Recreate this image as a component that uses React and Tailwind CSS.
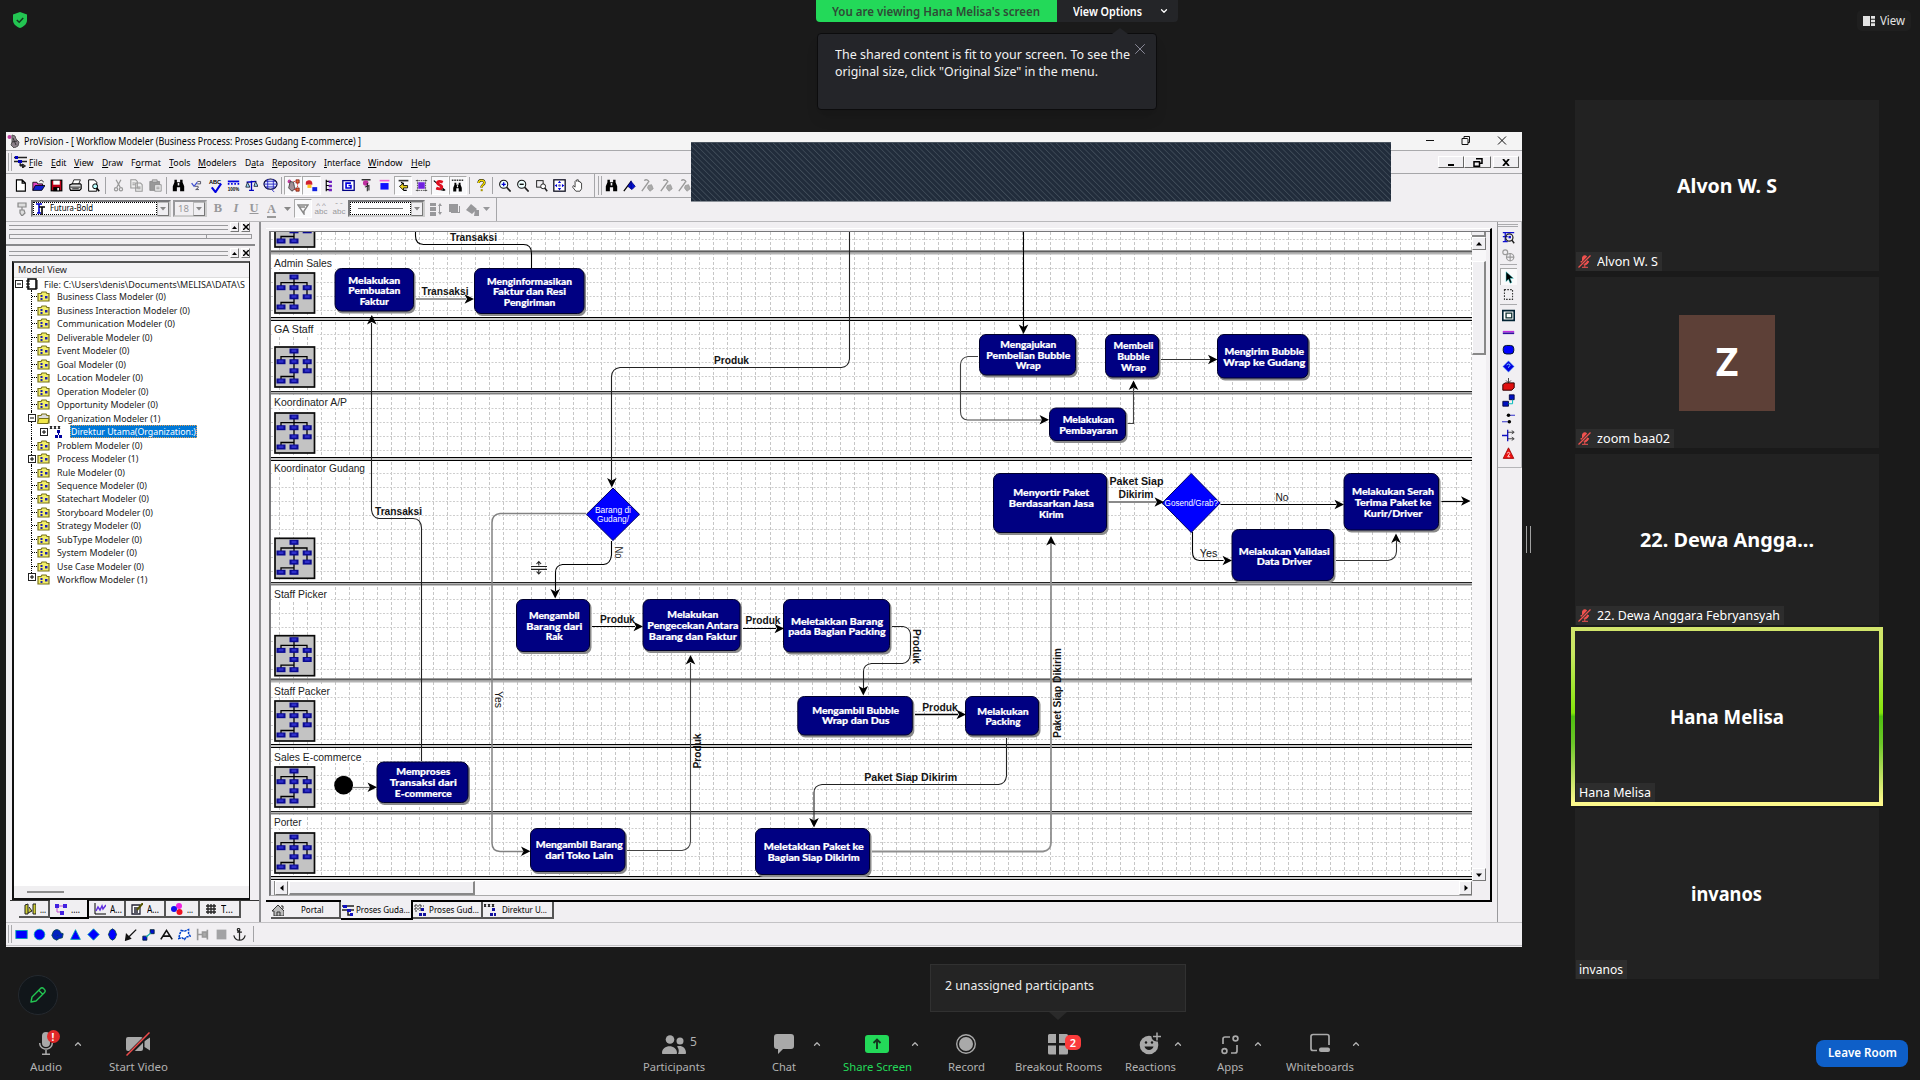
import React, { useLayoutEffect, useRef } from "react";
import { ChevronUp, ChevronDown, X } from "lucide-react";

// Single line of text squeezed or stretched to a given width
function Fit({ w, className = "", children }) {
  const ref = useRef(null);

  useLayoutEffect(() => {
    const el = ref.current;
    el.style.transform = "none";
    const natural = el.getBoundingClientRect().width;
    if (natural) el.style.transform = `scaleX(${w / natural})`;
  }, [w, children]);

  return (
    <span className="inline-block shrink-0 whitespace-nowrap" style={{ width: w }}>
      <span ref={ref} className={`inline-block origin-left whitespace-pre ${className}`}>
        {children}
      </span>
    </span>
  );
}

/* ---------- toolbar icons (16x16) ---------- */

const binoculars = (
  <path d="M3 1h3v3h4V1h3v3l2 5v6h-5v-5H6v5H1V9l2-5z M7 5v3h2V5z" fill="#000" />
);

const icons = {
  doc: <path d="M3 1h7l4 4v10H3z M10 1v4h4" fill="#fff" stroke="#000" strokeWidth="1.4" />,
  open: (
    <>
      <path d="M1 14V4h5l1 2h6v3" fill="#e040c0" stroke="#000" />
      <path d="M1 14l3-6h12l-4 6z" fill="#1020d0" stroke="#000" />
      <path d="M9 3c2-2 4-2 5 1" fill="none" stroke="#000" />
    </>
  ),
  save: (
    <>
      <rect x="1.5" y="1.5" width="13" height="13" fill="#c00018" stroke="#000" strokeWidth="1.5" />
      <rect x="4" y="2" width="8" height="5" fill="#fff" />
      <rect x="4" y="10" width="8" height="5" fill="#000" />
      <rect x="9" y="11" width="2" height="3" fill="#fff" />
    </>
  ),
  print: (
    <>
      <path d="M4 6l2-5h8l-2 5" fill="#fff" stroke="#000" />
      <path d="M1 7l3-1h10l1 1v5l-2 2H2l-1-2z" fill="#ddd" stroke="#000" strokeWidth="1.4" />
      <path d="M2 10h12M4 12h8" stroke="#000" />
    </>
  ),
  preview: (
    <>
      <path d="M2 1h7l3 3v11H2z" fill="#fff" stroke="#000" strokeWidth="1.2" />
      <circle cx="10" cy="9" r="3" fill="#bff" stroke="#000" strokeWidth="1.2" />
      <path d="M12 11l3 4" stroke="#000" strokeWidth="2" />
    </>
  ),
  cut: (
    <g fill="none" stroke="#999" strokeWidth="1.5">
      <path d="M5 1l5 9M11 1L6 10" />
      <circle cx="5" cy="12.5" r="2" />
      <circle cx="11" cy="12.5" r="2" />
    </g>
  ),
  copy: (
    <g fill="#eee" stroke="#999" strokeWidth="1.3">
      <path d="M1 1h6l2 2v8H1zM7 5h6l2 2v8H7z" />
      <path d="M3 5h3M3 7h3M9 10h4M9 12h4" />
    </g>
  ),
  paste: (
    <>
      <path d="M1 3h12v11H1z" fill="#999" stroke="#888" />
      <path d="M4 1h6v3H4z" fill="#ccc" stroke="#888" />
      <path d="M7 7h8v8H7z" fill="#eee" stroke="#888" />
      <path d="M9 10h4M9 12h4" stroke="#888" />
    </>
  ),
  find: binoculars,
  v2: (
    <>
      <path d="M2 5l3 4 4-5" fill="none" stroke="#4050d0" strokeWidth="1.6" />
      <path d="M9 3h4v3H9M6 9h4v2l-3 2h4" fill="none" stroke="#556" strokeWidth="1.2" />
    </>
  ),
  abc: (
    <>
      <text x="1" y="6" fontSize="6.5" fontWeight="bold" fontFamily="Liberation Sans" textLength="13" lengthAdjust="spacingAndGlyphs">ABC</text>
      <path d="M4 10l4 5 6-9" fill="none" stroke="#0000e0" strokeWidth="2.2" />
    </>
  ),
  ruler: (
    <>
      <path d="M1 3h14" stroke="#0000e0" strokeWidth="2.2" />
      <path d="M1 6h2M5 6h2M9 6h2M13 6h2" stroke="#0000e0" strokeWidth="2" />
      <text x="1" y="14.5" fontSize="6.5" fontWeight="bold" fontFamily="Liberation Sans" textLength="14" lengthAdjust="spacingAndGlyphs">100%</text>
    </>
  ),
  scales: (
    <>
      <path d="M8 2v12M5 14h6M2 4l12-1" stroke="#0000c0" strokeWidth="1.6" />
      <path d="M3 4l-2 6h5zM13 3l-2 6h5z" fill="#9df" stroke="#112" />
    </>
  ),
  globe: (
    <>
      <ellipse cx="8" cy="6.5" rx="7" ry="5.5" fill="#dfe6ff" stroke="#003" strokeWidth="1.2" />
      <path d="M1 6.5h14M3 3.5h10M3 9.5h10M5 1v11M11 1v11M9 12l3 3" stroke="#2020c0" strokeWidth=".9" />
    </>
  ),
  flow1: (
    <>
      <circle cx="3" cy="3" r="2.3" fill="#c040a0" />
      <path d="M4 3l4 1 1 5 1 3-4 3-4-4z" fill="#a09098" stroke="#333" />
      <path d="M11 1h4v4h-4zM11 11h4v4h-4z" fill="#e06a3a" stroke="#600" strokeWidth=".8" />
      <path d="M8 3h3M9 13h2M13 5v6" stroke="#d01010" strokeDasharray="2 1" />
    </>
  ),
  flow2: (
    <>
      <path d="M1 6a4 4 0 018-1v2H1z" fill="#d02030" />
      <path d="M3 7h5v4H3z" fill="#ffc020" />
      <path d="M9 10h6v5H9z" fill="#1020e0" />
    </>
  ),
  tree: (
    <>
      <path d="M4 1v14M4 3h4M4 8h4M4 13h4" stroke="#000" strokeWidth="1.4" />
      <path d="M7 2h4v3H7zM7 7h4v3H7zM7 12h4v3H7z" fill="#7020c0" />
    </>
  ),
  gbox: (
    <>
      <rect x="1" y="2" width="14" height="12" fill="#fff" stroke="#000080" strokeWidth="1.6" />
      <path d="M11 5H5v6h6V8H8" fill="none" stroke="#0000e0" strokeWidth="2" />
    </>
  ),
  node1: (
    <>
      <path d="M2 1h11" stroke="#000" strokeWidth="1.5" />
      <circle cx="7" cy="5" r="3.4" fill="#c030a0" />
      <path d="M9 5v10M6 10l5-2v6" stroke="#222" fill="none" strokeWidth="1.3" />
    </>
  ),
  node2: (
    <>
      <path d="M2 2h12" stroke="#f060d0" strokeWidth="2" />
      <rect x="3" y="5" width="10" height="8" fill="#1010ff" />
    </>
  ),
  node3: (
    <>
      <path d="M2 1h12v2H2z" fill="#333" />
      <path d="M3 9l5-4v3h5v3H8v3z" fill="#e8d020" stroke="#000" />
      <path d="M5 4l3 2M8 14h4" stroke="#000" strokeWidth="1.5" />
    </>
  ),
  node4: (
    <>
      <path d="M1 2h14M1 14h14M3 1v14M13 1v14" stroke="#333" strokeDasharray="2 1" />
      <rect x="4" y="4" width="8" height="8" fill="#7020e0" />
    </>
  ),
  sred: (
    <>
      <path d="M1 2l14 12M4 12l10 2" stroke="#000" strokeWidth="1.4" />
      <path d="M12 4c-6-3-9 1-4 3s3 7-4 4" fill="none" stroke="#e01020" strokeWidth="3.4" />
    </>
  ),
  bino2: (
    <>
      <path d="M1 1.5h14" stroke="#333" strokeDasharray="2 1" strokeWidth="2" />
      <g transform="translate(2 4) scale(.75)">{binoculars}</g>
    </>
  ),
  help: (
    <>
      <path d="M4.5 5c0-4.500 7-4.500 7-.5 0 3-3.500 2.500-3.500 6" fill="none" stroke="#000" strokeWidth="3" />
      <path d="M4.500 5c0-4.500 7-4.500 7-.5 0 3-3.500 2.500-3.500 6" fill="none" stroke="#f0d800" strokeWidth="2" />
      <rect x="7" y="12.500" width="2.500" height="2.500" fill="#a89400" />
    </>
  ),
  zin: (
    <>
      <circle cx="7" cy="6.5" r="5" fill="#eff" stroke="#111" strokeWidth="1.3" />
      <path d="M10.5 10l5 5.5" stroke="#222" strokeWidth="2" />
      <path d="M4.5 6.5h5M7 4v5" stroke="#0000d0" strokeWidth="1.6" />
    </>
  ),
  zout: (
    <>
      <circle cx="7" cy="6.5" r="5" fill="#eff" stroke="#111" strokeWidth="1.3" />
      <path d="M10.5 10l5 5.5" stroke="#222" strokeWidth="2" />
      <path d="M4.5 6.5h5" stroke="#000" strokeWidth="1.6" />
    </>
  ),
  zsel: (
    <>
      <rect x="2" y="2" width="8" height="8" fill="none" stroke="#222" strokeWidth="1.2" />
      <circle cx="10" cy="9" r="3" fill="#fff" stroke="#222" strokeWidth="1.2" />
      <path d="M12 11l3 4" stroke="#222" strokeWidth="2" />
    </>
  ),
  zfit: (
    <>
      <rect x="1" y="1" width="14" height="14" fill="#fff" stroke="#112" strokeWidth="1.6" />
      <path d="M8 2l2 3H6zM8 14l2-3H6zM2 8l3-2v4zM14 8l-3-2v4z" fill="#0000e0" />
      <circle cx="8" cy="8" r="1.6" fill="#66a" />
    </>
  ),
  hand: (
    <path
      d="M6 15l-4-5 1-2 2 2V3l1-1 1 1V1l2 0v2l2 0v1l2 1v7l-2 3z"
      fill="#fff"
      stroke="#444"
      strokeWidth="1.2"
    />
  ),
  flag: (
    <>
      <path d="M1 15L10 3" stroke="#000" strokeWidth="1.6" />
      <path d="M10 2v10M6 9l4-6 5 6-4 4z" fill="#0010d0" stroke="#000080" />
    </>
  ),
  flagOff: (
    <g stroke="#999" fill="#aaa">
      <path d="M1 15L9 4M4 2c2-2 5-1 6 2" fill="none" strokeWidth="1.6" />
      <path d="M9 8l4-1 2 5-4 3-3-4z" />
    </g>
  ),
};

function Icon({ name, size = 14 }) {
  return (
    <svg width={size} height={size} viewBox="0 0 16 16" className="shrink-0">
      {icons[name]}
    </svg>
  );
}

const Sep = ({ className = "w-[6px]" }) => (
  <div className={`flex h-full shrink-0 justify-center py-[3px] ${className}`}>
    <div className="w-px bg-[#a3a3a6]" />
  </div>
);

const Grip = () => (
  <div className="flex h-full shrink-0 gap-[2px] px-[2px] py-[2px]">
    <div className="w-px bg-[#a9a9ac]" />
    <div className="w-px bg-[#a9a9ac]" />
  </div>
);

const groups = [
  ["doc", "open", "save", "print", "preview"],
  ["cut", "copy", "paste"],
  ["find", "v2", "abc", "ruler", "scales", "globe"],
  ["flow1", "flow2", "tree", "gbox", "node1", "node2", "node3", "node4", "sred", "bino2"],
  ["help"],
  ["zin", "zout", "zsel", "zfit", "hand"],
];
const pressed = ["flow1", "flow2", "node3", "sred", "bino2"];

function MainToolbar() {
  return (
    <div className="flex h-[24px] items-center">
      <div className="flex h-full w-[589px] items-center border-r border-b border-[#a6a6a9]">
        <div className="w-[5px]" />
        {groups.map((g, i) => (
          <React.Fragment key={i}>
            {i > 0 && <Sep className={i === 1 ? "w-[7px]" : "w-[5px]"} />}
            {g.map((n) => (
              <div
                key={n}
                className={`flex h-[19px] w-[18.3px] shrink-0 items-center justify-center ${
                  pressed.includes(n) ? "border border-t-[#aaa] border-r-white border-b-white border-l-[#aaa] bg-[#f9f9fb]" : ""
                }`}
              >
                <Icon name={n} size={n === "globe" || n === "abc" ? 15 : 13} />
              </div>
            ))}
          </React.Fragment>
        ))}
      </div>
      <div className="flex h-full w-[330px] items-center border-b border-[#a6a6a9] pl-px">
        <Grip />
        <div className="-ml-[2px] flex">
          {["find", "flag", "flagOff", "flagOff", "flagOff"].map((n, i) => (
            <div key={i} className="flex w-[18.3px] shrink-0 justify-center">
              <Icon name={n} size={13} />
            </div>
          ))}
        </div>
      </div>
    </div>
  );
}

const DropArrow = () => (
  <div className="flex h-[14px] w-[12px] shrink-0 items-center justify-center border border-[#bbb] border-r-[#777] border-b-[#777] bg-[#f0eff2]">
    <svg width="6" height="4" viewBox="0 0 6 4">
      <path d="M0 0h6L3 3.5z" fill="#888" />
    </svg>
  </div>
);

function FormatToolbar() {
  return (
    <div className="flex h-[24px] border-b border-[#b9b8bb]">
      <div className="flex h-[23px] w-[491px] items-center border-r border-[#a6a6a9] pb-[2px] font-['Liberation_Serif'] text-[12.5px] font-bold text-[#98989b]">
        <svg className="mr-[4px] ml-[11px] shrink-0" width="10" height="14" viewBox="0 0 10 14">
          <path d="M1 1h8v4H1zM5 5v3M3 8h4l1 3-3 3-2-3z" fill="#ddd" stroke="#888" strokeWidth="1.2" />
        </svg>
        <div className="flex h-[17px] w-[140px] shrink-0 items-center border-2 border-[#77777a] border-r-[#ccc] border-b-[#ccc] bg-white">
          <div className="flex h-[13px] flex-1 items-center border border-dotted border-black">
            <svg className="mr-[4px] ml-px shrink-0" width="11" height="12" viewBox="0 0 11 12">
              <path d="M1 1h6M4 1v9M2 10h4" stroke="#0000d0" strokeWidth="1.6" fill="none" />
              <path d="M4 4h6M7 4v8" stroke="#000" strokeWidth="1.6" />
            </svg>
            <Fit w={43} className="-translate-y-px font-['Noto_Sans'] text-[9.5px] leading-none font-normal text-black">Futura-Bold</Fit>
          </div>
          <DropArrow />
        </div>
        <div className="ml-[2px] flex h-[17px] w-[34px] shrink-0 items-center border-2 border-[#99999c] border-r-[#ccc] border-b-[#ccc]">
          <span className="flex-1 pl-[3px] font-['Noto_Sans'] text-[9.5px] leading-none font-normal">18</span>
          <DropArrow />
        </div>
        <span className="ml-[2px] w-[18px] shrink-0 text-center">B</span>
        <span className="w-[18px] shrink-0 text-center italic">I</span>
        <span className="w-[18px] shrink-0 text-center underline">U</span>
        <span className="w-[17px] shrink-0 text-center leading-[12px]">
          <span className="border-b-2 border-[#999]">A</span>
        </span>
        <svg width="7" height="4" viewBox="0 0 7 4" className="ml-[4px] shrink-0"><path d="M0 0h7L3.5 4z" fill="#888" /></svg>
        <div className="ml-[3px] flex h-[19px] w-[18px] shrink-0 items-center justify-center border border-t-[#aaa] border-r-white border-b-white border-l-[#aaa] bg-[#f9f9fb]">
          <svg width="12" height="12" viewBox="0 0 12 12"><path d="M1 2h10L7 8v3zM3 4l5 0" fill="none" stroke="#888" strokeWidth="1.4" /></svg>
        </div>
        {["^ ^", "\u02c7 \u02c7"].map((m) => (
          <span key={m} className="flex w-[18px] shrink-0 flex-col items-center font-['Liberation_Sans'] text-[8px] leading-[6px] font-normal">
            <span className="whitespace-pre">{m}</span>
            <span>abc</span>
          </span>
        ))}
        <div className="flex h-[17px] w-[77px] shrink-0 items-center border-2 border-[#77777a] border-r-[#ccc] border-b-[#ccc] bg-white">
          <div className="flex h-[13px] flex-1 items-center border border-dotted border-black px-[7px]">
            <div className="h-px w-full bg-[#777]" />
          </div>
          <DropArrow />
        </div>
        <svg width="66" height="14" viewBox="0 0 66 14" className="shrink-0">
          <g fill="#98989b">
            <path d="M5 1h6v3H5zM5 5h6v4H5zM5 10h6v4H5zM13 4l2-3 2 3zM13 10l2 3 2-3zM14 4h1v6h-1z" />
            <path d="M24 2h9v8h-9zM26 11h9V4h-1v6h-8z" />
            <path d="M41 8l5-6 6 5-5 5zM50 8h4v6h-5zM58 5h7l-3.5 4z" />
          </g>
        </svg>
      </div>
    </div>
  );
}

const menu = [
  ["", "F", "ile", 13.5],
  ["", "E", "dit", 15.5],
  ["", "V", "iew", 19.5],
  ["", "D", "raw", 21],
  ["F", "o", "rmat", 30],
  ["", "T", "ools", 21.5],
  ["", "M", "odelers", 38.5],
  ["D", "a", "ta", 19],
  ["", "R", "epository", 44],
  ["", "I", "nterface", 36.5],
  ["", "W", "indow", 34.5],
  ["", "H", "elp", 19.5],
];

function MenuBar() {
  const btn =
    "flex h-[12px] items-center justify-center border border-white border-r-[#666] border-b-[#666] bg-[#f0eff2]";
  return (
    <div className="flex h-[23px] items-center border-b border-[#a6a6a9]">
      <Grip />
      <svg width="13" height="12" viewBox="0 0 13 12" className="mr-[2px] shrink-0">
        <path d="M0 1.5h13M0 5.5h13" stroke="#222" strokeWidth="1.6" />
        <path d="M1 0h3v3H1zM4 4h4v3H4z" fill="#0000c0" />
        <path d="M6 7v3h4M8.5 8l3 2-3 2z" fill="#222" stroke="#222" />
      </svg>
      <div className="flex flex-1 gap-[8px] pt-[2px] font-['Noto_Sans'] text-[9.8px] leading-[14px] text-black">
        {menu.map(([a, b, c, w]) => (
          <Fit key={b + c} w={w}>
            {a}
            <span className="underline">{b}</span>
            {c}
          </Fit>
        ))}
      </div>
      <div className="mr-[3px] flex">
        <div className={`w-[26px] ${btn}`}>
          <div className="mt-[5px] h-[2px] w-[6px] bg-black" />
        </div>
        <div className={`w-[27px] ${btn}`}>
          <svg width="10" height="9" viewBox="0 0 10 9">
            <path d="M3 .8h6v4.500H6M1 3.800h5.500v4.500H1z" fill="none" stroke="#000" strokeWidth="1.5" />
          </svg>
        </div>
        <div className={`ml-[2px] w-[26px] ${btn}`}>
          <svg width="8" height="7" viewBox="0 0 8 7">
            <path d="M1 0l6 7M7 0L1 7" stroke="#000" strokeWidth="1.8" />
          </svg>
        </div>
      </div>
    </div>
  );
}

function TitleBar() {
  return (
    <div className="flex h-[19px] items-center border-b border-[#a9a9ac] bg-[#f4f4f4]">
      <svg width="13" height="14" viewBox="0 0 13 14" className="mr-[4px] ml-[1px]">
        <circle cx="2.5" cy="3" r="2" fill="#c040a0" />
        <path d="M5 1l3 1 1 3 3 3-1 4-4 2-3-3 1-3z" fill="#8a8088" stroke="#555" />
        <path d="M6 4l3 7M5 8l5-1" stroke="#333" />
      </svg>
      <div className="flex pb-[3px] leading-none">
        <Fit w={337} className="font-['Noto_Sans'] text-[10.5px] leading-[14px] text-black">
          {"ProVision - [ Workflow Modeler (Business Process: Proses Gudang E-commerce) ]"}
        </Fit>
      </div>
      <svg width="84" height="12" viewBox="0 0 84 12" className="mr-[14px] ml-auto">
        <path d="M2 5.5h8" stroke="#111" />
        <path d="M38 3.500h5a1 1 0 011 1v5h-6zM40 3V1.500h5.500v6H44" fill="none" stroke="#111" />
        <path d="M74 1.500l8 8M82 1.500l-8 8" stroke="#111" />
      </svg>
    </div>
  );
}

/* ---------- model tree ---------- */

const tree = [
  ["Business Class Modeler (0)", 109],
  ["Business Interaction Modeler (0)", 133],
  ["Communication Modeler (0)", 118],
  ["Deliverable Modeler (0)", 95.5],
  ["Event Modeler (0)", 72.5],
  ["Goal Modeler (0)", 69],
  ["Location Modeler (0)", 86],
  ["Operation Modeler (0)", 91.5],
  ["Opportunity Modeler (0)", 101],
  ["Organization Modeler (1)", 103.5, "minus"],
  ["Direktur Utama(Organization:)", 125, "child"],
  ["Problem Modeler (0)", 85.5],
  ["Process Modeler (1)", 81.5, "plus"],
  ["Rule Modeler (0)", 68],
  ["Sequence Modeler (0)", 90],
  ["Statechart Modeler (0)", 92],
  ["Storyboard Modeler (0)", 96],
  ["Strategy Modeler (0)", 84],
  ["SubType Modeler (0)", 85],
  ["System Modeler (0)", 80],
  ["Use Case Modeler (0)", 87],
  ["Workflow Modeler (1)", 90.5, "plus"],
];

const Toggle = ({ minus }) => (
  <svg width="8" height="8" viewBox="0 0 8 8" className="shrink-0">
    <rect x=".5" y=".5" width="7" height="7" fill="#fff" stroke="#222" />
    <path d={minus ? "M2 4h4" : "M2 4h4M4 2v4"} stroke="#000" />
  </svg>
);

const Folder = ({ open }) => (
  <svg width="13" height="11" viewBox="0 0 13 11" className="shrink-0">
    <path d="M1 10V2.500h3l1-1.500h4l1 1.500h2V10z" fill={open ? "#ddd" : "#f2ee6a"} stroke="#77711a" strokeWidth="1.2" />
    {open ? (
      <path d="M.5 10.500l1.500-5h10l-1 5z" fill="#f2e84a" stroke="#77711a" />
    ) : (
      <path d="M3.500 4h2v2h-2zM3.500 7h2v2h-2zM8 5h2.500v2.500H8z" fill="#2020b0" />
    )}
  </svg>
);

function ModelTree() {
  return (
    <div className="flex h-[639px] w-[238px] flex-col overflow-hidden border-2 border-r border-[#111] border-t-[#555] bg-white font-['Noto_Sans'] text-[9.7px] leading-[13px] text-[#1b1b1b]">
      <div className="flex h-[15px] items-center border-b border-[#ddd] bg-[#f4f3f5] pb-[2px] pl-[4px]">
        <Fit w={49}>Model View</Fit>
      </div>
      <div className="flex h-[12.2px] shrink-0 items-center">
        <div className="ml-[1px]">
          <Toggle minus />
        </div>
        <svg width="12" height="12" viewBox="0 0 12 12" className="mr-[6px] ml-[3px] shrink-0">
          <path d="M2 1h8v10H2z" fill="#fff" stroke="#000" strokeWidth="1.5" />
          <path d="M0 3h4M0 6h4M0 9h4M11 2v9" stroke="#000" />
        </svg>
        <Fit w={201}>{"File: C:\\Users\\denis\\Documents\\MELISA\\DATA\\S"}</Fit>
      </div>
      <div className="flex-1">
        {tree.map(([label, w, kind], i) => (
          <div key={label} className="flex h-[13.48px] items-center pl-[17px]">
            {kind === "child" ? (
              <>
                <div className="h-full w-[11px] border-l border-dotted border-black" />
                <div className="-ml-[2px]">
                  <Toggle />
                </div>
                <svg width="14" height="12" viewBox="0 0 14 12" className="mr-[7px] ml-[1px] shrink-0">
                  <path d="M1 0l2 3M3 0L1 3M5 0l2 3M7 0L5 3M9 0l2 3M11 0L9 3" stroke="#000" />
                  <path d="M8 4h3v3H8zM6 9h3v3H6zM10 9h3v3h-3z" fill="#0000a0" />
                  <path d="M9.5 7v2" stroke="#0000a0" />
                </svg>
                <div className="flex h-[13px] items-center bg-[#0078d7] px-px text-white outline outline-dotted -outline-offset-1 outline-[#e8a050]">
                  <Fit w={w}>{label}</Fit>
                </div>
              </>
            ) : (
              <>
                <div
                  className={`flex w-[6px] shrink-0 items-center border-l border-dotted border-black ${
                    i === tree.length - 1 ? "mb-[6px] h-[8px]" : "h-full"
                  }`}
                >
                  {kind ? (
                    <div className="-ml-[4px]">
                      <Toggle minus={kind === "minus"} />
                    </div>
                  ) : (
                    <div className="w-full border-t border-dotted border-black" />
                  )}
                </div>
                <div className="mr-[7px]">
                  <Folder open={kind === "minus"} />
                </div>
                <Fit w={w}>{label}</Fit>
              </>
            )}
          </div>
        ))}
      </div>
      <div className="flex h-[12px] shrink-0 items-center bg-[#f0eff1] pl-[13px]">
        <div className="h-[2px] w-[37px] bg-[#8b8b8b]" />
      </div>
    </div>
  );
}

const PanelHead = () => (
  <div className="flex h-[11px] items-center pb-px pl-[3px]">
    <div className="mr-[2px] h-[5px] w-[219px] border-y border-[#99999c]" />
    <div className="mr-[2px] flex h-[10px] w-[9px] items-center justify-center border border-white border-r-[#777] border-b-[#777]">
      <svg width="5" height="3" viewBox="0 0 5 3"><path d="M0 3h5L2.5 0z" /></svg>
    </div>
    <div className="flex h-[10px] w-[9px] items-center justify-center border border-white border-r-[#777] border-b-[#777]">
      <svg width="6" height="6" viewBox="0 0 6 6"><path d="M0 0l6 6M6 0L0 6" stroke="#000" strokeWidth="1.5" /></svg>
    </div>
  </div>
);

const sideTabs = [
  { w: "w-[31px]", label: "...", lw: 6, icon: <path d="M1 2l3-1v10H1zM9 1h3v10H9zM5 4l3 4-4 2" fill="#cc3" stroke="#222" /> },
  {
    w: "w-[39px]",
    label: "....",
    lw: 9,
    active: true,
    icon: (
      <>
        <path d="M0 1h4v4H0zM8 1h4v4H8zM5 8h4v4H5z" fill="#4020e0" />
        <path d="M4 3h4M2 5v4h3" stroke="#c050d0" fill="none" />
      </>
    ),
  },
  { w: "w-[37px]", label: "A...", lw: 12, icon: <><path d="M1 0v11h11" fill="none" stroke="#000" /><path d="M2 8l2-4 2 3 2-4 1 3 3-4" fill="none" stroke="#6030e0" strokeWidth="1.5" /></> },
  { w: "w-[40px]", label: "A...", lw: 12, icon: <><path d="M1 2h8v9H1zM3 5h4M3 7h4M3 9h4" fill="#fff" stroke="#223" strokeWidth="1.3" /><path d="M6 7l6-7" stroke="#550" strokeWidth="2" /></> },
  { w: "w-[34px]", label: "...", lw: 6, icon: <><circle cx="8" cy="3" r="3" fill="#f020e0" /><circle cx="3" cy="6" r="3" fill="#1010f0" /><circle cx="8.5" cy="9" r="3" fill="#f01020" /></> },
  { w: "w-[41px]", label: "T...", lw: 12, icon: <path d="M1 3h10M1 6h10M1 9h10M3 1v10M6 1v10M9 1v10" stroke="#222" strokeWidth="1.3" /> },
];

function LeftPanel() {
  return (
    <div className="flex w-[253px] shrink-0 flex-col">
      <PanelHead />
      <div className="mt-[1px] ml-[3px] flex h-[5px] w-[243px] shrink-0 border border-[#99999c]">
        <div className="w-[197px] border-r border-[#99999c]" />
      </div>
      <div className="mt-[5px] h-[2px] w-[249px] shrink-0 bg-[#88888b]" />
      <div className="h-[2px] shrink-0" />
      <PanelHead />
      <div className="mt-[2px] ml-[6px]">
        <ModelTree />
      </div>
      <div className="ml-[4px] flex h-[21px] items-start border-t border-[#333] pl-[9px] font-['Noto_Sans'] text-[10px] leading-none text-black">
        {sideTabs.map((t, i) => (
          <div
            key={i}
            className={`flex shrink-0 items-center gap-[4px] border-r-2 border-b-2 border-[#555] bg-[#f0eff2] pl-[5px] ${t.w} ${
              t.active ? "-mt-px h-[19px] border-r-black border-b-black" : "h-[17px]"
            }`}
          >
            <svg width="12" height="12" viewBox="0 0 12 12" className="shrink-0">{t.icon}</svg>
            <Fit w={t.lw}>{t.label}</Fit>
          </div>
        ))}
      </div>
    </div>
  );
}

/* ---------- swimlane diagram ---------- */

// name, label y, label width, icon top, lane start, lane end
const lanes = [
  [null, 0, 0, 206, 225.3, 250],
  ["Admin Sales", 263, 58, 272, 254.3, 317],
  ["GA Staff", 329, 39.5, 346, 320.3, 391],
  ["Koordinator A/P", 402.5, 73, 412, 393.7, 457],
  ["Koordinator Gudang", 468.5, 91, 537.3, 459.3, 581],
  ["Staff Picker", 594, 53, 634.7, 585, 678],
  ["Staff Packer", 691, 56, 700, 682.7, 744],
  ["Sales E-commerce", 757, 87.5, 766, 747.3, 810],
  ["Porter", 822.5, 27.5, 832, 813.7, 876],
];

// x, y, w, h, text centre, then [text, centre y, width] rows
const nodes = [
  [334.5, 268, 79.5, 43.5, 374.3, [["Melakukan", 280.7, 52], ["Pembuatan", 291, 52], ["Faktur", 301.7, 29]]],
  [474, 268, 110.5, 46, 529.5, [["Menginformasikan", 281.5, 85], ["Faktur dan Resi", 292.3, 73], ["Pengiriman", 302.7, 51.5]]],
  [979, 334, 97, 41.5, 1028.3, [["Mengajukan", 344.7, 56], ["Pembelian Bubble", 355.7, 84], ["Wrap", 366, 25]]],
  [1105, 334, 54, 43.5, 1133.5, [["Membeli", 346, 40], ["Bubble", 356.7, 32.5], ["Wrap", 367.7, 25]]],
  [1217, 334, 91.5, 44.5, 1264.3, [["Mengirim Bubble", 352.3, 79.5], ["Wrap ke Gudang", 362.7, 82]]],
  [1049, 407.5, 77, 33.5, 1088.4, [["Melakukan", 420.3, 51.5], ["Pembayaran", 430.7, 58.5]]],
  [993, 473, 114, 60, 1051.3, [["Menyortir Paket", 493, 76], ["Berdasarkan Jasa", 504, 85], ["Kirim", 514.7, 24.5]]],
  [1343.5, 473, 95.5, 57.5, 1393, [["Melakukan Serah", 492, 82], ["Terima Paket ke", 502.7, 76.5], ["Kurir/Driver", 513.7, 58.5]]],
  [1231.5, 529, 102.5, 52, 1284.3, [["Melakukan Validasi", 551.7, 91], ["Data Driver", 561.7, 55]]],
  [516, 599, 74, 53, 554.3, [["Mengambil", 616.3, 50.6], ["Barang dari", 626.7, 56], ["Rak", 637.3, 17]]],
  [642.5, 599, 98, 52, 692.8, [["Melakukan", 615.3, 51], ["Pengecekan Antara", 626, 91], ["Barang dan Faktur", 636.7, 88]]],
  [783, 599, 107, 53.5, 837, [["Meletakkan Barang", 621.7, 92], ["pada Bagian Packing", 632, 97.5]]],
  [797.3, 696, 115.5, 39.5, 855.7, [["Mengambil Bubble", 711, 87], ["Wrap dan Dus", 721, 67.5]]],
  [965, 696, 74, 39.5, 1003, [["Melakukan", 711.7, 51.5], ["Packing", 722.3, 35]]],
  [376.5, 761.5, 92, 41.5, 423.3, [["Memproses", 772.3, 54], ["Transaksi dari", 783.3, 67], ["E-commerce", 794, 57]]],
  [530, 828, 95.5, 44, 579.2, [["Mengambil Barang", 845.3, 87], ["dari Toko Lain", 855.7, 68]]],
  [755, 828, 115, 47, 813.7, [["Meletakkan Paket ke", 847, 100], ["Bagian Siap Dikirim", 857.7, 92]]],
];

const edges = [
  ["M415.5 232v4q0 8 8 8.500h100q8 0 8 9V268", 1.1],
  ["M416 299h50", 2, "#9a9a9a"],
  ["M371.500 323V510q1 8 7.500 8.500h34q8 0 8.500 9.500V761", 1.1, "#222"],
  ["M849.500 232v127q-1 8-8 8.500H620q-8 1-8.500 9V480", 1.1, "#222"],
  ["M1023.500 232v96", 1.1],
  ["M978 356.500h-10q-7 1-7.500 8v47q0 8 7 8.500h75", 1.1, "#444"],
  ["M1127.500 423.500h6V388", 1.1, "#444"],
  ["M1161 359.500h50", 1.1, "#333"],
  ["M1108.500 502h48", 2, "#8a8a8a"],
  ["M1220.500 504.500h116", 1.2],
  ["M1441.500 501.500h22", 1.2],
  ["M1192.500 532v20q0 8 7 8.500h24", 1.1],
  ["M1336 560.500h52q8-1 8.500-9V541", 1.1, "#333"],
  ["M872 851.500h171q8-1 8-9V543", 1.8, "#8f8f8f"],
  ["M586 513.500h-86q-8 1-8 9V843q0 8 8 8.500h23", 1.5, "#828282"],
  ["M611.500 541v14q-1 9-8 9.500h-41q-7 1-7 8V591", 1.1],
  ["M592 626.500h43", 1.2],
  ["M743 628.500h33", 1.2],
  ["M892 626.500h11q7 1 7.500 8v20q-1 8-8 9h-31q-8 1-8 8V689", 1.1, "#222"],
  ["M915 714.500h43", 1.3],
  ["M1006.500 738v38q-1 8-8 8.500H822q-8 1-8 8V820", 1.1, "#222"],
  ["M627 850.500h55q8-1 8.500-9V663", 1.1, "#444"],
  ["M353 787.500h17", 1.2, "#777"],
];

// tip x, tip y, rotation
const heads = [
  [474, 299, 0], [371.8, 315, -90], [611.8, 487.5, 90], [1023.5, 334, 90], [1049, 419.7, 0],
  [1133.5, 380.5, -90], [1217.5, 359.5, 0], [1164, 502, 0], [1344, 504.5, 0], [1470.5, 501, 0],
  [1232, 560.5, 0], [1396, 533.5, -90], [1051, 536, -90], [530.5, 851.2, 0], [555.2, 598.5, 90],
  [643, 626.5, 0], [784, 628.5, 0], [863.3, 695.5, 90], [966, 714.5, 0], [814, 827.5, 90],
  [690.5, 655, -90], [377, 787.3, 0],
];

// text, centre x, centre y, width, rotation, regular weight
const labels = [
  ["Transaksi", 473.5, 237, 47], ["Transaksi", 445, 291.5, 47], ["Transaksi", 398.5, 511, 47],
  ["Produk", 731.5, 360, 35], ["Paket Siap", 1136.5, 481, 54], ["Dikirim", 1136, 494.5, 35],
  ["No", 1282, 497, 13, 0, true], ["Yes", 1208.5, 553, 17.5, 0, true], ["Yes", 498.5, 699.5, 17, 90, true],
  ["No", 618.8, 552.5, 12, 90, true], ["Produk", 617.5, 619, 35], ["Produk", 763, 620.5, 35],
  ["Produk", 916.5, 646.5, 35, 90], ["Produk", 940, 707, 35.5], ["Paket Siap Dikirim", 910.7, 777, 93],
  ["Produk", 697, 751, 35, -90], ["Paket Siap Dikirim", 1057.5, 693, 90, -90],
];

// y, line style
const dividers = [
  [250.5, "thick"], [317.5, "double"], [391, "grey"], [457, "double"], [582, "grey"],
  [678.5, "thick"], [744.5, "double"], [811, "grey"], [876.5, "double"],
];

const orgBoxes = [
  [15.5, 2.5], [2.5, 13.2], [15.5, 13.2], [28.7, 13.2],
  [15.5, 22.3], [28.7, 22.3], [2.5, 32.5], [15.5, 32.5],
];

const OrgIcon = ({ y }) => (
  <g transform={`translate(274 ${y})`}>
    <rect x="1" y="1" width="39.5" height="40" fill="#c3c3c3" stroke="#0a0a0a" strokeWidth="1.7" />
    <path d="M20 7v19M7 14v-3.300h26V24M20 26v4.500H7V34M20 30v4" fill="none" stroke="#000" strokeWidth="1.3" />
    {orgBoxes.map(([a, b]) => (
      <g key={`${a}-${b}`}>
        <rect x={a} y={b} width="9" height="5" fill="#0a0a90" />
        <rect x={a + 2} y={b + 1} width="5" height="2.5" fill="#2f2fc8" />
      </g>
    ))}
  </g>
);

function Diagram() {
  const cols = Array.from({ length: 86 }, (_, i) => 278.8 + i * 14.02);
  return (
    <svg width="1201" height="649" viewBox="271 232 1201 649" className="block shrink-0 bg-white">
      <g stroke="#c6c6c6" strokeWidth="1" strokeDasharray="3 2">
        {cols.map((x) => (
          <path key={x} d={`M${Math.round(x) + 0.5} 232V877`} />
        ))}
        {lanes.map(([, , , , from, to]) =>
          Array.from({ length: 9 }, (_, k) => from + 14 * (k + 1))
            .filter((y) => y < to - 2)
            .map((y) => <path key={y} d={`M271 ${Math.round(y) + 0.5}H1472`} strokeDasharray="2 1.5" stroke="#cecece" />)
        )}
      </g>

      {dividers.map(([y, kind]) => (
        <g key={y}>
          {kind === "double" && (
            <>
              <rect x="271" y={y - 0.5} width="1201" height="4" fill="#fff" />
              <rect x="271" y={Math.floor(y)} width="1201" height="1.2" fill="#000" />
              <rect x="271" y={Math.floor(y) + 2.8} width="1201" height="1.2" fill="#000" />
            </>
          )}
          {kind === "grey" && (
            <>
              <rect x="271" y={y} width="1201" height="3.3" fill="#c4c4c4" />
              <rect x="271" y={y} width="1201" height="1.1" fill="#222" />
              <rect x="271" y={y + 2.3} width="1201" height="1" fill="#666" />
            </>
          )}
          {kind === "thick" && (
            <>
              <rect x="271" y={y} width="1201" height="4" fill="#b4b4b4" />
              <rect x="271" y={y} width="1201" height="1.7" fill="#5e5e5e" />
            </>
          )}
        </g>
      ))}

      {lanes.map(([name, ly, lw, iy]) => (
        <g key={iy}>
          {name && (
            <>
              <rect x="272" y={ly - 7} width={lw + 6} height="13" fill="#fff" />
              <text x="274" y={ly + 3.8} fontSize="10.5" fontFamily="Liberation Sans" fill="#222" textLength={lw} lengthAdjust="spacingAndGlyphs">
                {name}
              </text>
            </>
          )}
          <OrgIcon y={iy} />
        </g>
      ))}

      {edges.map(([d, sw, c]) => (
        <path key={d} d={d} fill="none" stroke={c || "#000"} strokeWidth={sw} />
      ))}

      {nodes.map(([x, y, w, h, cx, rows]) => (
        <g key={`${x}-${y}`}>
          <rect x={x + 1.5} y={y + 2} width={w} height={h} rx="6.5" fill="#8a8a8a" />
          <rect x={x + 0.5} y={y + 0.5} width={w - 1} height={h - 1} rx="6.5" fill="#000082" stroke="#00002c" />
          {rows.map(([t, ty, tw]) => (
            <text
              key={t}
              x={cx - tw / 2}
              y={ty + 3}
              fontSize="8.8"
              fontWeight="900"
              fontFamily="Lato, sans-serif"
              fill="#fff"
              stroke="#fff"
              strokeWidth=".2"
              textLength={tw}
              lengthAdjust="spacingAndGlyphs"
            >
              {t}
            </text>
          ))}
        </g>
      ))}

      <path d="M613 488l26.500 26.300L613 540.500l-26.500-26.200z" fill="#0000ff" stroke="#000060" />
      <path d="M1191.200 473.500l29 29.500-29 29.500-29-29.500z" fill="#0000ff" stroke="#000060" />
      {[["Barang di", 613, 509.5, 36], ["Gudang/", 613, 519, 32], ["Gosend/Grab?", 1191.3, 503, 53.5]].map(([t, cx, cy, w]) => (
        <text key={t} x={cx - w / 2} y={cy + 3} fontSize="8.3" fontFamily="Liberation Sans" fill="#fff" textLength={w} lengthAdjust="spacingAndGlyphs">
          {t}
        </text>
      ))}

      <circle cx="343.6" cy="785.2" r="9.4" fill="#000" />

      {heads.map(([x, y, r]) => (
        <path key={`${x}-${y}`} d="M0 0l-9.500-4.800 2.500 4.800-2.500 4.800z" fill="#000" transform={`translate(${x} ${y}) rotate(${r})`} />
      ))}

      {labels.map(([t, cx, cy, w, r = 0, regular]) => (
        <text
          key={`${t}-${cx}`}
          transform={`translate(${cx} ${cy}) rotate(${r})`}
          x={-w / 2}
          y="3.5"
          fontSize="10.3"
          fontWeight={regular ? 400 : 700}
          fontFamily="Liberation Sans"
          fill="#141414"
          textLength={w}
          lengthAdjust="spacingAndGlyphs"
        >
          {t}
        </text>
      ))}

      {/* row resize cursor */}
      <path d="M531 566.500h16M531 569.300h16" stroke="#222" strokeWidth="1.2" />
      <path d="M538.800 561.500v4M538.800 570v4M536.500 564l2.300-2.500 2.300 2.500M536.500 571.500l2.300 2.500 2.300-2.500" fill="none" stroke="#222" strokeWidth="1.1" />
    </svg>
  );
}

function ScrollButton({ d, className }) {
  return (
    <div className={`flex shrink-0 items-center justify-center border border-white border-r-[#777] border-b-[#777] bg-[#f0eff2] ${className}`}>
      <svg width="6" height="6" viewBox="0 0 6 6"><path d={d} /></svg>
    </div>
  );
}

const docTabs = [
  {
    w: "w-[70px]",
    label: "Portal",
    lw: 22.5,
    icon: <path d="M0 7l6-6 6 6v5H2V7zM5 12V8h3v4M9 2h2v3" fill="#bbb" stroke="#333" />,
    gap: "gap-[17px]",
  },
  {
    w: "w-[72px]",
    label: "Proses Guda...",
    lw: 54,
    active: true,
    icon: (
      <>
        <path d="M0 2h12M0 6h12M6 6v5h4" fill="none" stroke="#222" strokeWidth="1.5" />
        <path d="M1 1h4v3H1zM5 5h4v3H5zM8 9h3v3H8z" fill="#1010c0" />
      </>
    ),
    gap: "gap-[2px]",
  },
  {
    w: "w-[70px]",
    label: "Proses Gud...",
    lw: 50,
    icon: (
      <>
        <path d="M0 2h10M0 5h8M2 0v9M6 0v7" stroke="#333" strokeDasharray="2 1" />
        <path d="M7 4h3v3H7zM5 9h3v3H5zM9 9h3v3H9z" fill="#1010a0" />
      </>
    ),
    gap: "gap-[3px]",
  },
  {
    w: "w-[71px]",
    label: "Direktur U...",
    lw: 45,
    icon: (
      <>
        <path d="M0 0l2 3M2 0L0 3M4 0l2 3M6 0L4 3M8 0l2 3M10 0L8 3" stroke="#000" />
        <path d="M8 4h3v3H8zM6 9h3v3H6zM10 9h2v3h-2z" fill="#1010a0" />
      </>
    ),
    gap: "gap-[6px]",
  },
];

function Workspace() {
  return (
    <div className="flex w-[1238px] shrink-0 flex-col border-l-2 border-[#8d8d90] pl-[5px]">
      <div className="mt-[6px] h-[674px] w-[1226px] shrink-0 border-t border-r-2 border-b-2 border-t-white border-r-black border-b-black pt-[2px] pl-[3px]">
        <div className="flex h-[650px] border-t border-l-2 border-[#77777a]">
          <Diagram />
          <div className="flex w-[14px] flex-col bg-[#f8f7f9]">
            <div className="h-[5px] w-[14px] border-r-2 border-b-2 border-[#888] bg-[#f0eff2]" />
            <ScrollButton d="M0 4.500h6L3 1z" className="h-[13px] w-[14px]" />
            <div className="mt-[11px] h-[94px] w-[14px] border border-r-2 border-b-2 border-white border-r-[#888] border-b-[#888] bg-[#f0eff2]" />
            <ScrollButton d="M0 1.500h6L3 5z" className="mt-auto h-[13px] w-[14px]" />
          </div>
        </div>
        <div className="flex h-[15px] w-[1203px] items-center border-b border-l-2 border-b-[#aaa] border-l-[#77777a] bg-[#f8f7f9]">
          <div className="h-[14px] w-[4px] border-r border-[#888] bg-[#f0eff2]" />
          <ScrollButton d="M4.500 0v6L1 3z" className="h-[14px] w-[13px]" />
          <div className="ml-px h-[14px] w-[186px] border border-r-2 border-b-2 border-white border-r-[#888] border-b-[#888] bg-[#f0eff2]" />
          <ScrollButton d="M1.500 0v6L5 3z" className="ml-auto h-[14px] w-[13px]" />
        </div>
      </div>
      <div className="flex items-start pl-[5px] font-['Noto_Sans'] text-[9.5px] leading-none text-black">
        {docTabs.map((t) => (
          <div
            key={t.label}
            className={`flex shrink-0 items-center border-r-2 border-b-2 border-[#555] bg-[#f0eff2] pl-[1px] ${t.w} ${t.gap} ${
              t.active ? "-mt-[2px] h-[20px] border-r-black border-b-black pt-[2px]" : "h-[17px]"
            }`}
          >
            <svg width="12" height="12" viewBox="0 0 12 12" className="shrink-0">{t.icon}</svg>
            <Fit w={t.lw}>{t.label}</Fit>
          </div>
        ))}
      </div>
    </div>
  );
}

const tools = [
  { mt: "mt-[4px]", d: <><path d="M1 2h14M1 7h6M1 13h6M4 2v11" stroke="#1010d0" strokeWidth="1.6" /><circle cx="9" cy="8" r="4.5" fill="none" stroke="#222" strokeWidth="1.5" /><path d="M8 6h3v3H8z" fill="#1010d0" /><path d="M12 11l3 4" stroke="#222" strokeWidth="1.8" /></> },
  { mt: "mt-[4px]", d: <g fill="none" stroke="#999" strokeWidth="1.4"><circle cx="4" cy="4" r="3" /><circle cx="10" cy="10" r="4.5" /><path d="M5 10h10M10 5v10" /></g> },
  { mt: "mt-[3px]", rule: true, on: true, d: <path d="M5 1v12l3-3 2 5 2-1-2-5h4z" fill="#000" stroke="#1cc" strokeWidth=".5" /> },
  { mt: "mt-[3px]", d: <path d="M3 2h10v12H3z" fill="none" stroke="#333" strokeWidth="1.3" strokeDasharray="2 1.5" /> },
  { mt: "mt-[4px]", rule: true, d: <><path d="M1 2h14v12H1z" fill="#fff" stroke="#023" strokeWidth="2" /><path d="M5 5h7v6H5z" fill="#fff" stroke="#133" strokeWidth="1.6" /></> },
  { mt: "mt-[4px]", d: <><path d="M1 6h14v2H1z" fill="#c030e0" /><path d="M1 8h14v2H1z" fill="#3010a0" /></> },
  { mt: "mt-[3px]", d: <rect x="1.5" y="3" width="13" height="10.5" rx="4" fill="#0000ff" stroke="#012" strokeWidth="1.2" /> },
  { mt: "mt-[4px]", d: <><path d="M8 1l7 7-7 7-7-7z" fill="#0000e0" stroke="#8cf" strokeWidth=".8" /><path d="M6 6.500c0-2 4-2 4 0 0 1-2 1-2 3" stroke="#9ff" fill="none" /></> },
  { mt: "mt-[4px]", d: <><path d="M1 8l3-2h11v6l-3 3H1z" fill="#e01010" stroke="#300" strokeWidth="1.2" /><path d="M8 0v6M5 3l3 3 3-3" stroke="#222" fill="none" /></> },
  { mt: "mt-[3px]", d: <><path d="M9 1h6v6H9zM1 9h7v6H1z" fill="#0010c0" stroke="#003" /><path d="M13 7v5H8" fill="none" stroke="#0bb" strokeWidth="1.2" /></> },
  { mt: "mt-[4px]", d: <><path d="M9 4h7M0 12h7" stroke="#33c" strokeWidth="1.5" /><circle cx="8" cy="4" r="2.2" /><circle cx="9" cy="12" r="2.2" /></> },
  { mt: "mt-[4px]", d: <><path d="M7 1v14M0 8h7" stroke="#1010c0" strokeWidth="1.6" /><path d="M7 4h7M7 12h7M12 2l3 2-3 2M12 10l3 2-3 2" stroke="#222" fill="none" /></> },
  { mt: "mt-[4px]", d: <><path d="M8 1l6.500 13h-13z" fill="#f01010" stroke="#900" /><path d="M6.500 8c0-2 3-2 3 0L7 12h3" stroke="#fff" fill="none" /></> },
];

function ToolColumn() {
  return (
    <div className="flex w-[25px] shrink-0 flex-col border-l border-[#99999c]">
      <div className="flex h-[246px] flex-col items-center border-r border-b border-[#b5b5b8] pr-[3px]">
        <div className="mt-[2px] h-[3px] w-[20px] shrink-0 border-y border-[#aaaaad]" />
        {tools.map((t, i) => (
          <React.Fragment key={i}>
            {t.rule && <div className="mt-[2px] h-px w-[17px] shrink-0 bg-[#aaaaad]" />}
            <div
              className={`flex w-[17px] shrink-0 items-center justify-center ${t.mt} ${
                t.on ? "h-[17px] border-t border-l border-[#aaa] bg-[#fafafb]" : "h-[13.5px]"
              }`}
            >
              <svg width="13" height="13" viewBox="0 0 16 16" preserveAspectRatio="none" className="shrink-0">{t.d}</svg>
            </div>
          </React.Fragment>
        ))}
      </div>
    </div>
  );
}

const shapes = [
  <rect x="1" y="3" width="14" height="10" fill="#0000ff" stroke="#0aa" />,
  <circle cx="8" cy="8" r="6.5" fill="#0000ff" stroke="#0aa" />,
  <path d="M3 4a6 6 0 015-2 5 5 0 014 4l3 1-1 5-4 1-3 2-4-2-2-4z M7 9h2" fill="#0020c0" stroke="#044" />,
  <path d="M8 2l6 12H2z" fill="#0000ff" stroke="#0aa" />,
  <path d="M8 1l7 7-7 7-7-7z" fill="#0000ff" stroke="#0aa" />,
  <path d="M5 3l3-2 3 2 2 5-2 5-3 2-3-2-2-5z" fill="#0000ff" stroke="#044" />,
  <path d="M15 2L4 13M2 15l1-7 5 5z" stroke="#111" strokeWidth="1.6" fill="#111" />,
  <><path d="M10 2h5v5h-5zM1 10h5v5H1z" fill="#0010d0" stroke="#023" /><path d="M5 11l6-5" stroke="#0aa" strokeWidth="1.5" /></>,
  <path d="M1 14L8 3l7 11M4 10h8" fill="none" stroke="#111" strokeWidth="2" />,
  <path d="M4 3l4 1 5-2 0 5 2 3-5 1-2 3-3-2-4 1 1-5z" fill="#fff" stroke="#0044cc" strokeWidth="1.9" strokeDasharray="3 1" />,
  <path d="M2 1v14M2 8h5M14 2v12M8 5h5v6H8z" fill="#aaa" stroke="#999" strokeWidth="2" />,
  <rect x="2" y="2" width="12" height="12" fill="#a2a2a4" />,
  <path d="M8 3v12M1 9c1 4 3 6 7 6s6-2 7-6M5 5h6M8 3a1.500 1.500 0 110-2 1.500 1.500 0 010 2z" fill="none" stroke="#222" strokeWidth="1.5" />,
];

function ProVision() {
  return (
    <div className="relative flex h-[815px] w-[1516px] shrink-0 flex-col overflow-hidden bg-[#f1eff2]">
      <TitleBar />
      <MenuBar />
      <MainToolbar />
      <FormatToolbar />
      <div className="flex h-[700px] shrink-0">
        <LeftPanel />
        <Workspace />
        <ToolColumn />
      </div>
      <div className="flex h-[24px] items-center border-y border-[#c3c2c5]">
        <Grip />
        <div className="-ml-[2px] flex">
          {shapes.map((s, i) => (
            <div key={i} className="flex w-[18.2px] shrink-0 justify-center">
              <svg width="13" height="13" viewBox="0 0 16 16">{s}</svg>
            </div>
          ))}
        </div>
        <Sep className="w-[10px]" />
      </div>

      {/* strip covering the toolbars */}
      <div className="absolute top-[10px] left-[685px] h-[60px] w-[700px] border-t border-b border-t-[#4a545f] border-b-[#8a9098] bg-[repeating-linear-gradient(45deg,#212c3b_0px,#212c3b_2.4px,#404c59_3px,#212c3b_4px)]" />
    </div>
  );
}

/* ---------- meeting chrome ---------- */

function TopBanner() {
  return (
    <div className="flex h-[132px] shrink-0 items-start font-['Noto_Sans']">
      <svg width="14" height="16" viewBox="0 0 14 16" className="mt-[12px] ml-[13px] shrink-0">
        <path d="M7 0l7 2.500V8c0 4-3 6.500-7 8-4-1.500-7-4-7-8V2.500z" fill="#23c552" />
        <path d="M3.800 8l2.400 2.300 4-4.300" fill="none" stroke="#123a1e" strokeWidth="1.5" />
      </svg>
      <div className="ml-[789px] flex flex-col">
        <div className="flex h-[22px]">
          <div className="flex w-[241px] items-center justify-center rounded-bl-[4px] bg-[#23d959] pr-[2px] pb-[3px]">
            <Fit w={208} className="text-[12.2px] leading-none font-semibold text-[#2f4a36]">
              You are viewing Hana Melisa's screen
            </Fit>
          </div>
          <div className="flex w-[121px] items-center rounded-br-[4px] bg-[#242528] pb-[3px] pl-[16px] text-white">
            <Fit w={69} className="text-[12.2px] leading-none font-semibold">View Options</Fit>
            <ChevronDown size={10} strokeWidth={3} className="mt-[3px] ml-[17px]" />
          </div>
        </div>
        <div className="relative mt-[11px] ml-[1px] flex h-[77px] w-[340px] rounded-[4px] border border-[#0c0c0d] bg-[#242529] pt-[12px] pl-[17px] text-[12px] leading-[17px] text-[#f2f2f2] shadow-lg">
          <div className="absolute -top-[6px] left-[294px] h-0 w-0 border-x-[8px] border-b-[6px] border-x-transparent border-b-[#242529]" />
          <div className="flex flex-col">
            <Fit w={295}>The shared content is fit to your screen. To see the</Fit>
            <Fit w={263}>original size, click "Original Size" in the menu.</Fit>
          </div>
          <X size={18} strokeWidth={1.3} className="-mt-[6px] ml-[1px] text-[#8b8b99]" />
        </div>
      </div>
    </div>
  );
}

const people = [
  { title: "Alvon W. S", tw: 100, tag: "Alvon W. S", gw: 61, muted: true },
  { avatar: "Z", tag: "zoom baa02", gw: 73, muted: true },
  { title: "22. Dewa Angga...", tw: 174, tag: "22. Dewa Anggara Febryansyah", gw: 183, muted: true },
  { title: "Hana Melisa", tw: 114, tag: "Hana Melisa", gw: 72, active: true },
  { title: "invanos", tw: 71, tag: "invanos", gw: 44 },
];

const MutedMic = () => (
  <svg width="13" height="13" viewBox="0 0 13 13" className="mr-[6px] ml-[-1px] shrink-0">
    <path d="M4.500 3a2.300 2.300 0 014.600 0v3a2.300 2.300 0 01-4.600 0zM3 6c0 5 7.500 5 7.500 0M6.800 10v2M4 12.300h6" fill="#f0524f" stroke="#f0524f" strokeWidth="1" />
    <path d="M1 12.500L12 .5" stroke="#2d2d2d" strokeWidth="2.8" />
    <path d="M.5 12.500L12.500 .5" stroke="#f0524f" strokeWidth="1.2" />
  </svg>
);

function Participant({ p }) {
  return (
    <div className="relative flex h-[171px] w-[304px] shrink-0 items-center justify-center bg-[#222222]">
      {p.active && (
        <div className="absolute -inset-[4px] border-[4px] [border-image:linear-gradient(to_bottom,#d2e46c_0%,#c8e860_15%,#84e60a_48%,#50c010_50%,#6cc828_65%,#b0dc58_80%,#fdf98c_98%)_4]" />
      )}
      {p.avatar ? (
        <div className="flex h-[96px] w-[96px] items-center justify-center bg-[#5d4037] pb-[2px] text-[39px] font-bold text-white">
          {p.avatar}
        </div>
      ) : (
        <div className="flex pt-[2px] pr-[1px]">
          <Fit w={p.tw} className="text-[19.5px] leading-[24px] font-bold text-white">{p.title}</Fit>
        </div>
      )}
      <div className="absolute bottom-0 left-px flex h-[19px] items-center bg-[#2d2d2d] pr-[4px] pl-[3px] text-[12.2px] leading-none text-white">
        {p.muted && <MutedMic />}
        <div className="flex pt-[1px]">
          <Fit w={p.gw}>{p.tag}</Fit>
        </div>
      </div>
    </div>
  );
}

function Gallery() {
  return (
    <div className="flex w-[384px] flex-col font-['Noto_Sans']">
      <div className="flex h-[100px] shrink-0 items-start justify-end">
        <div className="mt-[10px] mr-[9px] flex h-[21px] items-center rounded-[5px] bg-[#1f1f1f] px-[6px] text-[12px] leading-none text-[#e4e4e4]">
          <svg width="12" height="10" viewBox="0 0 12 10" className="mr-[5px]">
            <path d="M0 0h7v10H0zM8 0h4v2.700H8zM8 3.700h4v2.600H8zM8 7.300h4V10H8z" fill="#e4e4e4" />
          </svg>
          <Fit w={25}>View</Fit>
        </div>
      </div>
      <div className="flex flex-col gap-[6px] pl-[39px]">
        {people.map((p) => (
          <Participant key={p.tag} p={p} />
        ))}
      </div>
    </div>
  );
}

const controls = [
  {
    label: "Audio", w: 32, box: "ml-[26px] w-[40px]", caret: "ml-[8px]", badge: "!",
    icon: <path d="M8 4a4 4 0 018 0v7a4 4 0 01-8 0zM5 11c0 9 14 9 14 0h-1.500c0 7-11 7-11 0zM11.200 18h1.600v4h-1.600zM8 21.500h8v1.500H8z" />,
  },
  {
    label: "Start Video", w: 59, box: "ml-[21px] w-[70px]",
    icon: (
      <>
        <path d="M0 7a2 2 0 012-2h13a2 2 0 012 2v10a2 2 0 01-2 2H2a2 2 0 01-2-2zM18.500 9L24 5.500v13L18.500 15z" />
        <path d="M2 23L24 1" stroke="#1a1a1a" strokeWidth="4" />
        <path d="M.5 23.500L23.500 .5" stroke="#f04b4b" strokeWidth="1.5" />
      </>
    ),
  },
  {
    label: "Participants", w: 62, box: "ml-[466px] w-[70px]", count: "5",
    icon: (
      <>
        <circle cx="8" cy="7.5" r="4.3" />
        <circle cx="18" cy="9" r="3.5" />
        <path d="M0 21c0-9 15-9 15 0 0 .8-.5 1-1 1H1c-.5 0-1-.2-1-1zM16 22h7c.5 0 1-.2 1-1 0-6-5-8-9-6.500 1.500 1.500 2.500 4.500 1 7.500z" />
      </>
    ),
  },
  {
    label: "Chat", w: 24, box: "ml-[55px] w-[40px]", caret: "ml-[9px]",
    icon: <path d="M2 5a3 3 0 013-3h14a3 3 0 013 3v9a3 3 0 01-3 3h-8l-5 5v-5H5a3 3 0 01-3-3z" />,
  },
  {
    label: "Share Screen", w: 69, box: "ml-[21px] w-[70px]", caret: "-ml-px", green: true,
    icon: (
      <>
        <rect x="0" y="3" width="24" height="18" rx="3" fill="#23d959" />
        <path d="M12 17V8M8.500 11L12 7.500l3.500 3.500" fill="none" stroke="#14331d" strokeWidth="1.9" />
      </>
    ),
  },
  {
    label: "Record", w: 37, box: "ml-[27px] w-[40px]",
    icon: (
      <>
        <circle cx="12" cy="12" r="9.3" fill="none" stroke="#a9a9a9" strokeWidth="1.4" />
        <circle cx="12" cy="12" r="7" />
      </>
    ),
  },
  {
    label: "Breakout Rooms", w: 87, box: "ml-[28px] w-[89px]", alert: "2",
    icon: <path d="M1 3.500A1.500 1.500 0 012.500 2H9v9H1zM12 2h7.500A1.500 1.500 0 0121 3.500V11h-9zM1 13.500h8v9H2.500A1.500 1.500 0 011 21zM12 13.500h9V21a1.500 1.500 0 01-1.500 1.500H12z" />,
  },
  {
    label: "Reactions", w: 51, box: "ml-[21px] w-[52px]", caret: "-ml-[2px]",
    icon: (
      <>
        <circle cx="11" cy="13" r="9.3" />
        <circle cx="18.5" cy="4.5" r="5" fill="#1a1a1a" />
        <path d="M19 .5v8M15 4.500h8" stroke="#a9a9a9" strokeWidth="1.5" />
        <circle cx="8" cy="10.5" r="1.2" fill="#1a1a1a" />
        <circle cx="14" cy="10.5" r="1.2" fill="#1a1a1a" />
        <path d="M6.500 14.500c1 4.500 8 4.500 9 0z" fill="#1a1a1a" />
      </>
    ),
  },
  {
    label: "Apps", w: 26.5, box: "ml-[33px] w-[30px]", caret: "ml-[9px]",
    icon: (
      <g fill="none" stroke="#a9a9a9" strokeWidth="1.7">
        <path d="M5 12V7a2 2 0 012-2h5M19 13v6a2 2 0 01-2 2h-4" />
        <circle cx="17.5" cy="6.5" r="2.4" />
        <circle cx="6.5" cy="19" r="2.4" />
      </g>
    ),
  },
  {
    label: "Whiteboards", w: 68, box: "ml-[23px] w-[69px]", caret: "-ml-[2px]",
    icon: (
      <>
        <path d="M9 18.500H5a2 2 0 01-2-2V4.500a2 2 0 012-2h14a2 2 0 012 2V13" fill="none" stroke="#a9a9a9" strokeWidth="1.7" />
        <rect x="11" y="15.5" width="11" height="4.5" rx="2" />
      </>
    ),
  },
];

function ControlBar() {
  return (
    <div className="flex h-[60px] shrink-0 items-start font-['Noto_Sans'] text-[11.3px] leading-none text-[#b2b2b2]">
      {controls.map((c) => (
        <React.Fragment key={c.label}>
          <div className={`relative flex shrink-0 flex-col items-center pt-[12px] ${c.box}`}>
            <svg width="24" height="24" viewBox="0 0 24 24" fill="#a9a9a9">{c.icon}</svg>
            <div className={`mt-[5px] ${c.green ? "text-[#23d959]" : ""}`}>
              <Fit w={c.w}>{c.label}</Fit>
            </div>
            {c.badge && (
              <div className="absolute top-[10px] left-[20.5px] flex h-[13px] w-[13px] items-center justify-center rounded-full bg-[#e02828] text-[10px] font-bold text-white">
                {c.badge}
              </div>
            )}
            {c.count && <div className="absolute top-[16px] left-[51px] text-[12px]">{c.count}</div>}
            {c.alert && (
              <div className="absolute top-[15px] left-[51px] flex h-[15px] w-[16px] items-center justify-center rounded-[5px] bg-[#fb3b3b] text-[11px] font-semibold text-white">
                {c.alert}
              </div>
            )}
          </div>
          {c.caret && (
            <div className={`mt-[19px] w-[8px] shrink-0 ${c.caret}`}>
              <ChevronUp size={10} strokeWidth={3} className="-ml-px" />
            </div>
          )}
        </React.Fragment>
      ))}
      <button className="mt-[20px] mr-[12px] ml-auto flex h-[27px] w-[92px] items-center justify-center rounded-[8px] bg-[#0e5fc8] pb-px text-[12px] font-semibold text-white">
        <Fit w={69}>Leave Room</Fit>
      </button>
    </div>
  );
}

export default function App() {
  return (
    <div className="relative flex h-[1080px] w-[1920px] flex-col overflow-hidden bg-[#1a1a1a]">
      <div className="flex h-[1020px] shrink-0">
        <div className="flex w-[1536px] shrink-0 flex-col">
          <TopBanner />
          <div className="flex items-center pl-[6px]">
            <ProVision />
            <div className="ml-[4px] h-[27px] w-[5px] border-x border-[#a0a0a0]" />
          </div>
          <div className="flex pt-[17px] pl-[18px]">
            <div className="mt-[11px] flex h-[40px] w-[40px] items-center justify-center rounded-full border border-[#24292f] bg-[#11161a]">
              <svg width="18" height="18" viewBox="0 0 18 18" fill="none" stroke="#23c552" strokeWidth="1.4">
                <path d="M2 16l1-5 8.500-8.500a2 2 0 013 0l1 1a2 2 0 010 3L7 15zM10 4.500L13.500 8" strokeLinejoin="round" />
              </svg>
            </div>
            <div className="relative ml-[872px] flex h-[48px] w-[256px] items-center border border-[#313131] bg-[#242424] pb-[4px] pl-[14px] font-['Noto_Sans'] text-[12px] text-[#ececec]">
              <Fit w={149}>2 unassigned participants</Fit>
              <div className="absolute top-[47px] left-[118px] h-0 w-0 border-x-[9px] border-t-[8px] border-x-transparent border-t-[#2a2a2a]" />
            </div>
          </div>
        </div>
        <Gallery />
      </div>
      <ControlBar />
    </div>
  );
}
